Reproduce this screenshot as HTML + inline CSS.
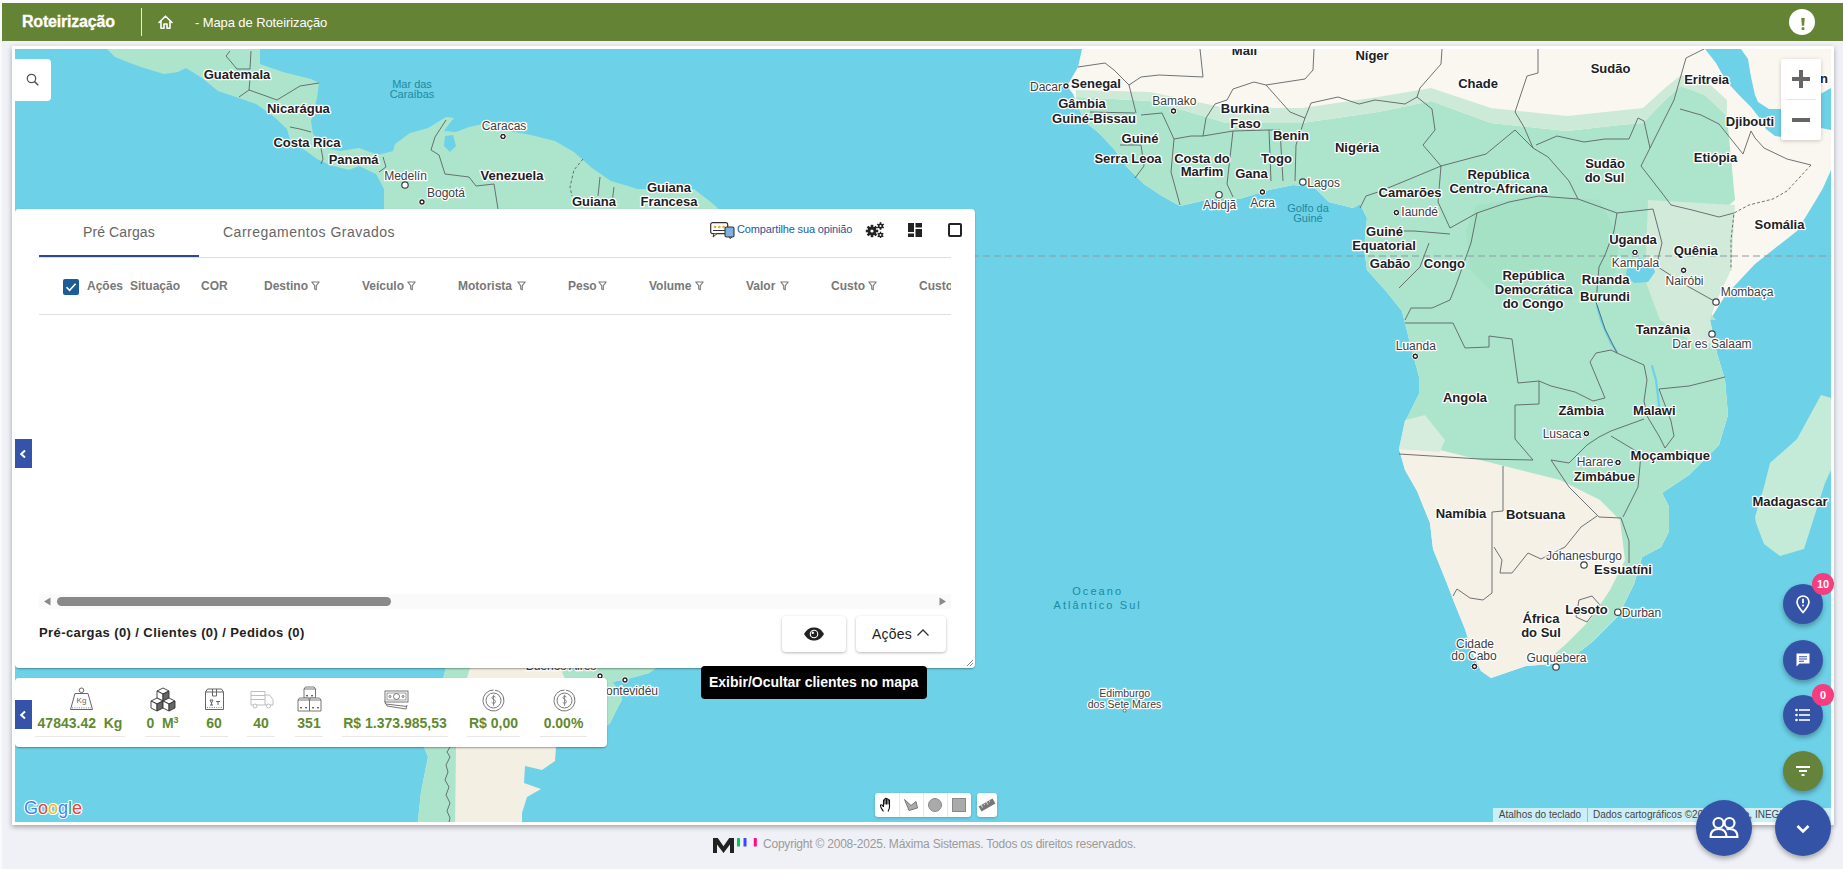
<!DOCTYPE html>
<html><head><meta charset="utf-8">
<style>
*{box-sizing:border-box;margin:0;padding:0}
html,body{width:1843px;height:869px;overflow:hidden}
body{background:#f0f1f6;font-family:"Liberation Sans",sans-serif;position:relative}
.abs{position:absolute}
#topstrip{left:0;top:0;width:1843px;height:3px;background:#fbfbfc}
#leftstrip{left:0;top:0;width:2px;height:869px;background:#fafafb}
#header{left:2px;top:3px;width:1841px;height:38px;background:#658335;color:#fff}
#card{left:12px;top:46px;width:1822px;height:779px;background:#fff;box-shadow:0 2px 5px rgba(0,0,0,.33)}
#map{left:15px;top:49px;width:1816px;height:773px;background:#6dd1e7;overflow:hidden}
#map svg{position:absolute;left:0;top:0}
.lbl{position:absolute;font-weight:bold;font-size:13px;color:#202124;white-space:nowrap;text-shadow:0 0 2px #fff,0 0 2px #fff,0 0 2px #fff;line-height:14px;text-align:center}
.city{position:absolute;font-size:11px;color:#3c4043;white-space:nowrap;text-shadow:0 0 2px #fff,0 0 2px #fff,0 0 2px #fff;line-height:12px;text-align:center}
.sea{position:absolute;font-size:11px;color:#1b8fa8;white-space:nowrap;line-height:11px;text-align:center}
#panel{left:15px;top:209px;width:960px;height:459px;background:#fff;border-radius:4px;box-shadow:0 2px 2px -1px rgba(0,0,0,.35), 1px 0 2px -1px rgba(0,0,0,.2)}
#panel .abs{position:absolute}
#panel > .abs{margin-left:-15px;margin-top:-209px}
.tab{font-size:14px;color:#666;line-height:16px;letter-spacing:0.1px}
.colh{position:absolute;top:279px;font-size:12px;font-weight:bold;color:#787878;line-height:14px}
.btn{background:#fff;border-radius:4px;box-shadow:0 1px 3px rgba(0,0,0,.28)}
#stats{left:15px;top:678px;width:592px;height:69px;background:#fff;border-radius:4px;box-shadow:0 2px 2px -1px rgba(0,0,0,.35), 1px 0 2px -1px rgba(0,0,0,.2)}
.chev{width:17px;height:29px;background:#3553a8}
.stt{top:715px;font-size:14px;font-weight:bold;color:#5f8a2e;line-height:16px;text-align:center;white-space:nowrap}
.sul{top:736px;height:1px;background:#e8e8e8}
.google{font-size:17px;font-weight:bold;line-height:22px;letter-spacing:-0.3px;-webkit-text-stroke:0;text-shadow:0 0 1px #fff,0 0 2px #fff,0 0 2px #fff}
.attr{top:808px;height:14px;background:rgba(255,255,255,.65);font-size:10px;color:#444;line-height:14px;text-align:center;white-space:nowrap;overflow:hidden}
.fab{width:40px;height:40px;border-radius:50%;background:#3553a6;box-shadow:0 3px 5px rgba(0,0,0,.3)}
.fab.big{width:56px;height:56px}
.badge{width:22px;height:22px;border-radius:50%;background:#f53d7f;color:#fff;font-size:11px;font-weight:bold;text-align:center;line-height:22px}
</style></head>
<body>
<div class="abs" id="topstrip"></div>
<div class="abs" id="leftstrip"></div>
<div class="abs" id="header">
<div class="abs" style="left:20px;top:10px;font-size:16px;font-weight:bold;letter-spacing:-0.2px;line-height:18px;-webkit-text-stroke:0.3px #fff">Roteirização</div>
<div class="abs" style="left:139px;top:5px;width:1px;height:28px;background:#e8eedf"></div>
<svg class="abs" style="left:155px;top:11px" width="17" height="16" viewBox="0 0 17 16"><path d="M2,8.5 L8.5,2.2 L15,8.5 M4,7 V14.2 H7 V10 H10 V14.2 H13 V7" fill="none" stroke="#fff" stroke-width="1.6" stroke-linejoin="round" stroke-linecap="round"/></svg>
<div class="abs" style="left:193px;top:12px;font-size:13px;line-height:15px;letter-spacing:-0.1px">- Mapa de Roteirização</div>
<div class="abs" style="left:1787px;top:6px;width:26px;height:26px;border-radius:50%;background:#fff"></div>
<svg class="abs" style="left:1797px;top:13px" width="8" height="16" viewBox="0 0 8 16"><path d="M2.2,2 H5.8 L5.1,9.8 H2.9 Z" fill="#6a8a3a"/><rect x="2.6" y="11.2" width="2.8" height="2.7" rx="0.5" fill="#6a8a3a"/></svg>
</div>
<div class="abs" id="card"></div>
<div class="abs" id="map">
<svg width="1816" height="773" viewBox="15 49 1816 773"><path fill="#ace5cc" d="M107,49 L260,49 L260,64 L283,72 L311,79 L319,83 L317,98 L311,121 L313,134 L325,148 L340,151 L359,148 L378,155 L393,151 L395,144 L410,133 L428,128 L446,117 L454,118 L449,124 L444,131 L456,132 L469,127 L483,124 L509,131 L531,135 L555,141 L574,152 L592,168 L611,181 L638,189 L694,189 L712,203 L722,212 L722,230 L384,230 L384,189 L376,174 L359,166 L349,170 L330,165 L317,159 L306,151 L290,140 L287,129 L272,115 L256,104 L239,98 L218,91 L202,78 L186,68 L178,72 L164,74 L144,68 L130,63 L115,57 Z"/>
<path fill="#6dd1e7" d="M445,136 L453,135 L456,146 L450,152 L444,146 Z"/>
<path fill="#f4efe3" d="M446,668 L656,668 L649,673 L631,678 L612,682 L619,690 L622,700 L619,705 L610,723 L590,740 L556,747 L555,761 L542,770 L525,766 L524,783 L541,789 L527,797 L522,813 L522,830 L417,830 L421,792 L428,757 L424,747 L430,720 L440,690 Z"/>
<path fill="#ace5cc" d="M417,830 L421,792 L428,757 L424,747 L430,720 L440,690 L446,668 L470,668 L460,700 L456,747 L455,830 Z"/>
<path fill="#ace5cc" d="M560,668 L656,668 L649,673 L631,678 L612,682 L619,690 L622,700 L619,705 L610,723 L590,735 L575,700 Z"/>
<path fill="#faf7f1" d="M1082,49 L1705,49 L1716,63 L1726,81 L1739,95 L1751,107 L1758,116 L1766,129 L1775,136 L1790,138 L1821,128 L1831,130 L1831,170 L1823,188 L1816,200 L1797,231 L1755,264 L1725,296 L1710,320 L1716,350 L1725,380 L1728,415 L1719,445 L1689,475 L1662,493 L1669,507 L1669,531 L1661,547 L1642,557 L1634,584 L1618,616 L1592,642 L1565,663 L1526,666 L1491,678 L1481,671 L1473,655 L1465,629 L1454,602 L1446,581 L1433,549 L1430,523 L1417,491 L1405,470 L1399,449 L1405,422 L1419,394 L1419,377 L1409,339 L1402,311 L1385,290 L1367,270 L1364,249 L1367,218 L1360,204 L1353,208 L1329,202 L1314,187 L1293,185 L1269,190 L1239,199 L1210,199 L1180,206 L1162,196 L1144,184 L1126,166 L1114,149 L1099,133 L1084,121 L1078,106 L1073,94 L1067,86 L1078,67 Z"/>
<path fill="#f5f1e6" d="M1399,449 L1405,470 L1417,491 L1430,523 L1433,549 L1446,581 L1454,602 L1465,629 L1473,655 L1481,671 L1491,678 L1526,666 L1565,663 L1592,642 L1618,616 L1634,584 L1642,557 L1661,547 L1669,531 L1669,507 L1662,493 L1620,480 L1560,470 L1500,455 L1440,445 Z"/>
<path fill="#ace5cc" d="M1076,97 L1150,101 L1200,115 L1226,123 L1302,123 L1378,112 L1431,101 L1491,123 L1567,131 L1620,125 L1643,123 L1665,100 L1681,86 L1705,95 L1727,116 L1735,200 L1700,230 L1680,270 L1700,300 L1716,320 L1710,320 L1716,350 L1725,380 L1728,415 L1719,445 L1689,475 L1662,493 L1669,507 L1669,531 L1661,547 L1642,557 L1634,584 L1618,616 L1592,642 L1565,663 L1545,662 L1565,645 L1590,620 L1610,590 L1625,560 L1620,520 L1600,500 L1560,480 L1500,465 L1440,450 L1399,449 L1405,422 L1419,394 L1419,377 L1409,339 L1402,311 L1385,290 L1367,270 L1364,249 L1367,218 L1360,204 L1353,208 L1329,202 L1314,187 L1293,185 L1269,190 L1239,199 L1210,199 L1180,206 L1162,196 L1144,184 L1126,166 L1114,149 L1099,133 L1084,121 L1078,106 Z"/>
<path fill="#cdead8" d="M1076,90 L1150,92 L1226,108 L1302,108 L1378,97 L1431,88 L1491,108 L1567,116 L1643,108 L1665,88 L1681,75 L1705,80 L1727,100 L1727,116 L1705,95 L1681,86 L1665,100 L1643,123 L1620,125 L1567,131 L1491,123 L1431,101 L1378,112 L1302,123 L1226,123 L1200,115 L1150,101 L1076,97 Z"/>
<path fill="#a5e2c5" d="M1476,205 L1540,196 L1600,200 L1620,240 L1612,290 L1570,300 L1500,300 L1470,270 L1466,230 Z"/>
<path fill="#d2ead9" d="M1648,200 L1735,205 L1731,270 L1716,302 L1710,320 L1716,345 L1690,340 L1660,320 L1645,280 Z"/>
<path fill="#d6ecdc" d="M1405,420 L1425,415 L1445,440 L1440,452 L1399,449 Z"/>
<path fill="#6dd1e7" d="M1628,262 L1640,258 L1652,262 L1655,272 L1648,282 L1634,283 L1626,275 Z"/>
<path fill="#faf7f1" d="M1741,49 L1831,49 L1831,88 L1810,100 L1781,109 L1769,109 L1758,102 L1755,95 L1751,77 L1748,59 Z"/>
<path fill="#c4ebd8" d="M1821,395 L1831,398 L1831,470 L1825,483 L1804,549 L1780,556 L1764,544 L1756,523 L1755,517 L1764,487 L1770,463 L1797,439 Z"/>
<g fill="#a9e3c9" opacity="1">
</g>
<g fill="none" stroke="#6dd1e7" stroke-width="2.2" stroke-linecap="round"><polyline points="1597,306 1601,320 1605,330 1611,343 1617,352"/><polyline points="1652,366 1656,380 1658,396 1659,406 1657,415"/></g>
<path d="M15,256 H1831" stroke="#8d9aa0" stroke-width="1.2" stroke-dasharray="7 4" fill="none"/>
<g fill="none" stroke="#5f6368" stroke-width="0.9" stroke-linejoin="round">
<polyline points="230,51 226,56 237,69 250,69 251,51"/>
<polyline points="250,79 249,90 239,97"/>
<polyline points="249,90 266,96 277,100 300,86 319,83"/>
<polyline points="290,127 300,129 311,132"/>
<polyline points="321,148 323,159 321,164"/>
<polyline points="383,157 386,167 379,172"/>
<polyline points="446,120 435,137 431,150 439,155 445,174 469,177 476,186 494,184 498,209"/>
<polyline points="600,177 598,196"/>
<polyline points="614,187 612,203"/>
<polyline points="1078,67 1105,63 1114,70 1129,85 1141,77 1159,75 1203,77 1200,49"/>
<polyline points="1314,49 1313,70 1305,79 1266,85 1254,82 1233,89 1227,100 1215,104 1206,118 1203,136"/>
<polyline points="1266,85 1290,112 1305,118"/>
<polyline points="1305,118 1311,103 1338,97 1359,104 1375,100 1405,104 1417,97"/>
<polyline points="1305,118 1296,145 1295,181"/>
<polyline points="1280,130 1283,181"/>
<polyline points="1269,130 1271,181"/>
<polyline points="1233,131 1269,130 1280,130"/>
<polyline points="1233,131 1227,184 1233,197"/>
<polyline points="1174,139 1191,136 1203,136 1233,131"/>
<polyline points="1174,139 1171,172 1180,205"/>
<polyline points="1141,115 1162,113 1174,139"/>
<polyline points="1090,112 1135,113"/>
<polyline points="1120,145 1141,145 1144,166 1135,178"/>
<polyline points="1129,85 1136,113"/>
<polyline points="1442,49 1441,64 1420,88 1417,97"/>
<polyline points="1417,97 1432,109 1435,130 1423,145 1441,166 1405,181 1378,192 1366,196 1360,208"/>
<polyline points="1538,49 1538,73 1527,76 1515,112 1524,127 1533,148"/>
<polyline points="1441,166 1486,154 1515,130 1533,148"/>
<polyline points="1533,148 1548,157 1569,181 1578,199"/>
<polyline points="1536,145 1557,136 1584,142 1605,139 1629,139 1638,118 1644,121 1650,148"/>
<polyline points="1650,148 1641,166 1662,193 1671,205"/>
<polyline points="1650,148 1674,100 1686,58 1704,49"/>
<polyline points="1680,109 1701,115 1719,124 1743,154 1751,131"/>
<polyline points="1751,131 1755,138 1764,148 1787,159 1811,165"/>
<polyline points="1671,205 1692,210 1719,217 1734,213"/>
<polyline points="1578,199 1617,213 1653,209"/>
<polyline points="1653,209 1662,243 1656,267"/>
<polyline points="1617,213 1614,231 1605,255 1599,267 1596,302"/>
<polyline points="1578,199 1539,196 1509,202 1477,213 1471,243"/>
<polyline points="1441,166 1438,202 1450,228 1477,213"/>
<polyline points="1378,231 1414,231 1450,234"/>
<polyline points="1429,243 1420,267 1408,279 1399,288"/>
<polyline points="1471,243 1456,285 1450,300 1432,308 1411,308 1405,320"/>
<polyline points="1405,323 1453,323 1465,348 1489,347 1489,336 1512,339 1518,383 1539,381"/>
<polyline points="1539,381 1539,404 1515,405 1515,439 1533,460"/>
<polyline points="1399,454 1480,459 1533,460"/>
<polyline points="1539,381 1551,386 1575,392 1593,401 1605,398 1590,362 1596,353 1611,350 1617,353"/>
<polyline points="1596,302 1605,329 1617,353"/>
<polyline points="1617,353 1644,365 1647,380 1644,401 1647,416"/>
<polyline points="1659,389 1689,386 1725,377"/>
<polyline points="1647,416 1659,436 1665,448 1674,436 1671,421 1659,389"/>
<polyline points="1611,431 1644,419"/>
<polyline points="1611,431 1599,437 1587,445 1569,463 1551,460"/>
<polyline points="1611,436 1641,454 1638,487 1623,517"/>
<polyline points="1551,460 1569,487 1584,502 1599,517 1621,518"/>
<polyline points="1503,466 1503,511 1492,512 1492,593 1483,600 1470,598 1457,589 1453,596"/>
<polyline points="1494,547 1502,560 1500,573 1512,573 1528,553 1541,559 1565,547 1581,527 1597,516"/>
<polyline points="1621,518 1629,541 1629,563"/>
<polyline points="1579,600 1592,596 1600,605 1587,622 1576,617 1579,600"/>
<polyline points="1647,260 1689,287 1716,302"/>
<polyline points="450,747 447,752 450,757 446,765 448,772 445,780 449,787 446,795 450,803 447,811 450,818 449,822"/>
</g>
<g fill="none" stroke="#5f6368" stroke-width="0.9" stroke-dasharray="3 2">
<polyline points="583,159 574,170 570,187 572,196"/>
<polyline points="1811,165 1787,191 1773,199 1749,205 1734,213 1731,240 1731,270"/>
</g>
<g font-family="Liberation Sans" font-weight="bold" font-size="13" fill="#202124" stroke="#fff" stroke-width="2.6" paint-order="stroke" stroke-linejoin="round" text-anchor="middle">
<text x="237" y="78.5">Guatemala</text>
<text x="298.4" y="112.5">Nicarágua</text>
<text x="307" y="146.5">Costa Rica</text>
<text x="353.6" y="164">Panamá</text>
<text x="512" y="180">Venezuela</text>
<text x="594" y="205.5">Guiana</text>
<text x="669" y="192">Guiana</text>
<text x="669" y="206">Francesa</text>
<text x="1372" y="60">Níger</text>
<text x="1244.5" y="55">Mali</text>
<text x="1096" y="87.5">Senegal</text>
<text x="1082" y="108">Gâmbia</text>
<text x="1094" y="123">Guiné-Bissau</text>
<text x="1245" y="113">Burkina</text>
<text x="1245.5" y="127.5">Faso</text>
<text x="1140" y="142.5">Guiné</text>
<text x="1291" y="140">Benin</text>
<text x="1357" y="151.5">Nigéria</text>
<text x="1128" y="162.5">Serra Leoa</text>
<text x="1202" y="162.5">Costa do</text>
<text x="1202" y="176">Marfim</text>
<text x="1276.5" y="162.5">Togo</text>
<text x="1251.5" y="177.5">Gana</text>
<text x="1478" y="88">Chade</text>
<text x="1610.5" y="73">Sudão</text>
<text x="1706.6" y="83.5">Eritreia</text>
<text x="1750" y="126">Djibouti</text>
<text x="1715.5" y="162">Etiópia</text>
<text x="1605" y="168">Sudão</text>
<text x="1604.5" y="182">do Sul</text>
<text x="1498.5" y="179">República</text>
<text x="1498.6" y="193">Centro-Africana</text>
<text x="1410" y="197">Camarões</text>
<text x="1384.5" y="236">Guiné</text>
<text x="1384" y="250">Equatorial</text>
<text x="1390" y="267.5">Gabão</text>
<text x="1444.4" y="267.5">Congo</text>
<text x="1633" y="243.5">Uganda</text>
<text x="1695.7" y="255">Quênia</text>
<text x="1779.5" y="228.5">Somália</text>
<text x="1533.5" y="280">República</text>
<text x="1533.8" y="294">Democrática</text>
<text x="1533" y="308">do Congo</text>
<text x="1605.6" y="284">Ruanda</text>
<text x="1605" y="300.5">Burundi</text>
<text x="1663" y="334">Tanzânia</text>
<text x="1465" y="401.5">Angola</text>
<text x="1581.3" y="415">Zâmbia</text>
<text x="1654.2" y="415">Malawi</text>
<text x="1670.2" y="460">Moçambique</text>
<text x="1604.5" y="480.5">Zimbábue</text>
<text x="1790" y="506">Madagascar</text>
<text x="1461" y="518">Namíbia</text>
<text x="1535.6" y="518.5">Botsuana</text>
<text x="1623" y="574">Essuatíni</text>
<text x="1586.5" y="613.5">Lesoto</text>
<text x="1541" y="623">África</text>
<text x="1541" y="637">do Sul</text>
<text x="1824" y="83">n</text>
</g>
<g font-family="Liberation Sans" font-size="12" fill="#3c4043" stroke="#fff" stroke-width="2.6" paint-order="stroke" stroke-linejoin="round" text-anchor="middle">
<text x="405.5" y="179.5">Medelín</text>
<text x="446" y="196.5">Bogotá</text>
<text x="504" y="130">Caracas</text>
<text x="1046" y="91">Dacar</text>
<text x="1174.3" y="105">Bamako</text>
<text x="1323.6" y="187">Lagos</text>
<text x="1219.6" y="208.5">Abidjã</text>
<text x="1262.6" y="207">Acra</text>
<text x="1419.7" y="216">Iaundé</text>
<text x="1635.5" y="267">Kampala</text>
<text x="1684.5" y="285">Nairóbi</text>
<text x="1747" y="296">Mombaça</text>
<text x="1711.9" y="348">Dar es Salaam</text>
<text x="1415.8" y="350">Luanda</text>
<text x="1562" y="437.5">Lusaca</text>
<text x="1595" y="465.5">Harare</text>
<text x="1584" y="559.5">Johanesburgo</text>
<text x="1641.5" y="616.5">Durban</text>
<text x="1475" y="648">Cidade</text>
<text x="1474" y="660">do Cabo</text>
<text x="1556.5" y="661.5">Guquebera</text>
<text x="561" y="670">Buenos Aires</text>
<text x="627" y="694.5">Montevidéu</text>
<text x="1124.7" y="697" font-size="10.5">Edimburgo</text><text x="1124.5" y="707.5" font-size="10.5">dos Sete Mares</text>
</g>
<g stroke="#fff" stroke-width="1">
<circle cx="405" cy="185" r="3.2" fill="#fff" stroke="#3c4043" stroke-width="1.2"/>
<circle cx="422" cy="202" r="3.3" fill="#202124"/><circle cx="422" cy="202" r="1.3" fill="#fff" stroke="none"/>
<circle cx="503" cy="136.5" r="3.3" fill="#202124"/><circle cx="503" cy="136.5" r="1.3" fill="#fff" stroke="none"/>
<circle cx="1066" cy="86" r="3.3" fill="#202124"/><circle cx="1066" cy="86" r="1.3" fill="#fff" stroke="none"/>
<circle cx="1173.5" cy="111" r="3.3" fill="#202124"/><circle cx="1173.5" cy="111" r="1.3" fill="#fff" stroke="none"/>
<circle cx="1302.8" cy="182" r="3.2" fill="#fff" stroke="#3c4043" stroke-width="1.2"/>
<circle cx="1219" cy="194.7" r="3.2" fill="#fff" stroke="#3c4043" stroke-width="1.2"/>
<circle cx="1262.4" cy="192" r="3.3" fill="#202124"/><circle cx="1262.4" cy="192" r="1.3" fill="#fff" stroke="none"/>
<circle cx="1396.4" cy="212.6" r="3.3" fill="#202124"/><circle cx="1396.4" cy="212.6" r="1.3" fill="#fff" stroke="none"/>
<circle cx="1635" cy="252.4" r="3.3" fill="#202124"/><circle cx="1635" cy="252.4" r="1.3" fill="#fff" stroke="none"/>
<circle cx="1683.6" cy="270.3" r="3.3" fill="#202124"/><circle cx="1683.6" cy="270.3" r="1.3" fill="#fff" stroke="none"/>
<circle cx="1716" cy="302" r="3.2" fill="#fff" stroke="#3c4043" stroke-width="1.2"/>
<circle cx="1712" cy="334" r="3.2" fill="#fff" stroke="#3c4043" stroke-width="1.2"/>
<circle cx="1415.3" cy="356.3" r="3.3" fill="#202124"/><circle cx="1415.3" cy="356.3" r="1.3" fill="#fff" stroke="none"/>
<circle cx="1586.4" cy="433.5" r="3.3" fill="#202124"/><circle cx="1586.4" cy="433.5" r="1.3" fill="#fff" stroke="none"/>
<circle cx="1618" cy="462.5" r="3.3" fill="#202124"/><circle cx="1618" cy="462.5" r="1.3" fill="#fff" stroke="none"/>
<circle cx="1584" cy="565" r="3.2" fill="#fff" stroke="#3c4043" stroke-width="1.2"/>
<circle cx="1617.8" cy="612.2" r="3.2" fill="#fff" stroke="#3c4043" stroke-width="1.2"/>
<circle cx="1474.5" cy="666.5" r="3.3" fill="#202124"/><circle cx="1474.5" cy="666.5" r="1.3" fill="#fff" stroke="none"/>
<circle cx="1556" cy="667" r="3.2" fill="#fff" stroke="#3c4043" stroke-width="1.2"/>
<circle cx="600" cy="676" r="3.3" fill="#202124"/><circle cx="600" cy="676" r="1.3" fill="#fff" stroke="none"/>
<circle cx="625" cy="680" r="3.3" fill="#202124"/><circle cx="625" cy="680" r="1.3" fill="#fff" stroke="none"/>
<circle cx="1124.7" cy="710.5" r="1.5" fill="#fff" stroke="#555" stroke-width="0.8"/>
</g>
<g font-family="Liberation Sans" font-size="11" fill="#2089a2" text-anchor="middle">
<text x="412" y="88">Mar das</text>
<text x="412" y="97.5">Caraíbas</text>
<text x="1308" y="212">Golfo da</text>
<text x="1308" y="222">Guiné</text>
<text x="1097.7" y="595" letter-spacing="2.1">Oceano</text><text x="1097.7" y="609" letter-spacing="2.1">Atlântico Sul</text>
</g></svg>
</div>

<div class="abs" id="panel">
<div class="abs tab" style="left:83px;top:224px">Pré Cargas</div>
<div class="abs tab" style="left:223px;top:224px;letter-spacing:0.5px">Carregamentos Gravados</div>
<div class="abs" style="left:39px;top:257px;width:912px;height:1px;background:#dedede"></div>
<div class="abs" style="left:39px;top:255px;width:160px;height:2px;background:#2a48a0"></div>
<svg class="abs" style="left:710px;top:222px" width="25" height="17" viewBox="0 0 25 17"><rect x="0.7" y="0.7" width="17" height="11" rx="2" fill="#fff" stroke="#333" stroke-width="1.2"/><circle cx="5" cy="5" r="1.3" fill="#e8a92a"/><circle cx="9.3" cy="5" r="1.3" fill="#e8a92a"/><circle cx="13.6" cy="5" r="1.3" fill="#e8a92a"/><path d="M3,8.5 H15" stroke="#333" stroke-width="1"/><path d="M4,11.7 L3,15 L7,11.7" fill="#fff" stroke="#333" stroke-width="1"/><rect x="15" y="5" width="9" height="10" rx="1.5" fill="#7fb0e0" stroke="#333" stroke-width="1.1"/><path d="M19.5,15 L20,16.5 L22,15" fill="#7fb0e0" stroke="#333" stroke-width="1"/></svg>
<div class="abs" style="left:737px;top:223px;font-size:11px;line-height:13px;color:#1a5b9c;letter-spacing:-0.15px">Compartilhe sua opinião</div>
<svg class="abs" style="left:865px;top:222px" width="20" height="16" viewBox="0 0 20 16"><g fill="#222"><circle cx="7" cy="9" r="4.2"/><g transform="translate(7 9)"><rect x="-1.3" y="-6.2" width="2.6" height="12.4"/><rect x="-1.3" y="-6.2" width="2.6" height="12.4" transform="rotate(45)"/><rect x="-1.3" y="-6.2" width="2.6" height="12.4" transform="rotate(90)"/><rect x="-1.3" y="-6.2" width="2.6" height="12.4" transform="rotate(135)"/></g><circle cx="7" cy="9" r="1.6" fill="#fff"/><g transform="translate(15.5 4)"><circle r="2.6"/><rect x="-0.8" y="-3.8" width="1.6" height="7.6"/><rect x="-0.8" y="-3.8" width="1.6" height="7.6" transform="rotate(60)"/><rect x="-0.8" y="-3.8" width="1.6" height="7.6" transform="rotate(120)"/><circle r="1" fill="#fff"/></g><g transform="translate(15.5 13)"><circle r="2.3"/><rect x="-0.7" y="-3.3" width="1.4" height="6.6"/><rect x="-0.7" y="-3.3" width="1.4" height="6.6" transform="rotate(60)"/><rect x="-0.7" y="-3.3" width="1.4" height="6.6" transform="rotate(120)"/><circle r="0.9" fill="#fff"/></g></g></svg>
<svg class="abs" style="left:908px;top:223px" width="14" height="14" viewBox="0 0 14 14"><g fill="#222"><rect x="0" y="0" width="6" height="9"/><rect x="0" y="10.5" width="6" height="3.5"/><rect x="7.5" y="0" width="6.5" height="4.5"/><rect x="7.5" y="6" width="6.5" height="8"/></g></svg>
<div class="abs" style="left:948px;top:223px;width:14px;height:14px;border:2px solid #222;border-radius:2px"></div>
<div class="abs" style="left:63px;top:279px;width:16px;height:16px;background:#1c5d99;border-radius:2px"></div>
<svg class="abs" style="left:63px;top:279px" width="16" height="16" viewBox="0 0 16 16"><path d="M3.5,8.3 L6.6,11.3 L12.6,4.8" fill="none" stroke="#fff" stroke-width="1.6"/></svg>
<div class="abs" style="left:39px;top:272px;width:912px;height:30px;overflow:hidden">
<div style="position:relative;left:-39px;top:-272px;width:1000px;height:400px">
<div class="abs colh" style="left:87px">Ações</div><div class="abs colh" style="left:130px">Situação</div><div class="abs colh" style="left:201px">COR</div><div class="abs colh" style="left:264px">Destino</div><svg class="abs" style="left:311px;top:281px" width="9" height="10" viewBox="0 0 9 10"><path d="M0.8,1 H8.2 L5.3,4.6 V8.8 L3.7,8 V4.6 Z" fill="none" stroke="#7a7a7a" stroke-width="1.1" stroke-linejoin="round"/></svg><div class="abs colh" style="left:362px">Veículo</div><svg class="abs" style="left:407px;top:281px" width="9" height="10" viewBox="0 0 9 10"><path d="M0.8,1 H8.2 L5.3,4.6 V8.8 L3.7,8 V4.6 Z" fill="none" stroke="#7a7a7a" stroke-width="1.1" stroke-linejoin="round"/></svg><div class="abs colh" style="left:458px">Motorista</div><svg class="abs" style="left:517px;top:281px" width="9" height="10" viewBox="0 0 9 10"><path d="M0.8,1 H8.2 L5.3,4.6 V8.8 L3.7,8 V4.6 Z" fill="none" stroke="#7a7a7a" stroke-width="1.1" stroke-linejoin="round"/></svg><div class="abs colh" style="left:568px">Peso</div><svg class="abs" style="left:598px;top:281px" width="9" height="10" viewBox="0 0 9 10"><path d="M0.8,1 H8.2 L5.3,4.6 V8.8 L3.7,8 V4.6 Z" fill="none" stroke="#7a7a7a" stroke-width="1.1" stroke-linejoin="round"/></svg><div class="abs colh" style="left:649px">Volume</div><svg class="abs" style="left:695px;top:281px" width="9" height="10" viewBox="0 0 9 10"><path d="M0.8,1 H8.2 L5.3,4.6 V8.8 L3.7,8 V4.6 Z" fill="none" stroke="#7a7a7a" stroke-width="1.1" stroke-linejoin="round"/></svg><div class="abs colh" style="left:746px">Valor</div><svg class="abs" style="left:780px;top:281px" width="9" height="10" viewBox="0 0 9 10"><path d="M0.8,1 H8.2 L5.3,4.6 V8.8 L3.7,8 V4.6 Z" fill="none" stroke="#7a7a7a" stroke-width="1.1" stroke-linejoin="round"/></svg><div class="abs colh" style="left:831px">Custo</div><svg class="abs" style="left:868px;top:281px" width="9" height="10" viewBox="0 0 9 10"><path d="M0.8,1 H8.2 L5.3,4.6 V8.8 L3.7,8 V4.6 Z" fill="none" stroke="#7a7a7a" stroke-width="1.1" stroke-linejoin="round"/></svg><div class="abs colh" style="left:919px">Custo</div>
</div></div>
<div class="abs" style="left:39px;top:314px;width:912px;height:1px;background:#e0e0e0"></div>
<div class="abs" style="left:39px;top:594px;width:912px;height:15px;background:#fafafa"></div>
<svg class="abs" style="left:43px;top:597px" width="8" height="9" viewBox="0 0 8 9"><path d="M7.5,0.5 V8.5 L1,4.5 Z" fill="#8a8a8a"/></svg>
<div class="abs" style="left:57px;top:597px;width:334px;height:9px;background:#898989;border-radius:5px"></div>
<svg class="abs" style="left:939px;top:597px" width="8" height="9" viewBox="0 0 8 9"><path d="M0.5,0.5 V8.5 L7,4.5 Z" fill="#8a8a8a"/></svg>
<div class="abs" style="left:39px;top:625px;font-size:13px;font-weight:bold;color:#222;line-height:15px;letter-spacing:0.4px">Pré-cargas (0) / Clientes (0) / Pedidos (0)</div>
<div class="abs btn" style="left:782px;top:616px;width:64px;height:36px"></div>
<svg class="abs" style="left:803px;top:627px" width="22" height="14" viewBox="0 0 22 14"><path d="M1,7 C4,1.5 8,0.5 11,0.5 C14,0.5 18,1.5 21,7 C18,12.5 14,13.5 11,13.5 C8,13.5 4,12.5 1,7 Z" fill="#222"/><circle cx="11" cy="7" r="4.3" fill="#fff"/><circle cx="11" cy="7" r="3.2" fill="#222"/><circle cx="9.8" cy="5.8" r="1.2" fill="#fff"/></svg>
<div class="abs btn" style="left:856px;top:616px;width:90px;height:36px"></div>
<div class="abs" style="left:872px;top:626px;font-size:14px;color:#222;line-height:16px;letter-spacing:0.2px">Ações</div>
<svg class="abs" style="left:916px;top:628px" width="14" height="9" viewBox="0 0 14 9"><path d="M1.5,7.5 L7,2 L12.5,7.5" fill="none" stroke="#333" stroke-width="1.3"/></svg>
<svg class="abs" style="left:966px;top:659px" width="8" height="8" viewBox="0 0 8 8"><path d="M1,7 L7,1 M4,7 L7,4" stroke="#777" stroke-width="0.9"/></svg>
</div>
<div class="abs" style="left:701px;top:666px;width:226px;height:33px;background:#000;border-radius:4px"></div>
<div class="abs" style="left:709px;top:674px;font-size:14px;font-weight:bold;color:#fff;line-height:16px;letter-spacing:0px">Exibir/Ocultar clientes no mapa</div>

<div class="abs" id="stats"></div>
<div class="abs chev" style="left:15px;top:439px"></div>
<div class="abs chev" style="left:15px;top:700px"></div>
<div class="abs stt" style="left:35px;width:90px">47843.42&nbsp; Kg</div>
<div class="abs stt" style="left:145px;width:35px">0&nbsp; M<sup style="font-size:9px;vertical-align:5px;line-height:0">3</sup></div>
<div class="abs stt" style="left:200px;width:28px">60</div>
<div class="abs stt" style="left:247px;width:28px">40</div>
<div class="abs stt" style="left:295px;width:28px">351</div>
<div class="abs stt" style="left:342px;width:106px">R$ 1.373.985,53</div>
<div class="abs stt" style="left:467px;width:53px">R$ 0,00</div>
<div class="abs stt" style="left:540px;width:47px">0.00%</div>
<div class="abs sul" style="left:35px;width:90px"></div>
<div class="abs sul" style="left:145px;width:35px"></div>
<div class="abs sul" style="left:200px;width:28px"></div>
<div class="abs sul" style="left:247px;width:28px"></div>
<div class="abs sul" style="left:295px;width:28px"></div>
<div class="abs sul" style="left:342px;width:106px"></div>
<div class="abs sul" style="left:467px;width:53px"></div>
<div class="abs sul" style="left:540px;width:47px"></div>
<svg class="abs" style="left:69px;top:687px" width="25" height="24" viewBox="0 0 25 24"><g fill="none" stroke="#666" stroke-width="1"><circle cx="12.5" cy="3.3" r="2.3"/><path d="M6,6.5 H19 L23.5,22.5 H1.5 Z" fill="#fff"/></g><path d="M3,20.8 H22" stroke="#666" stroke-width="0.8" stroke-dasharray="1 1.3"/><text x="12.5" y="16" font-family="Liberation Sans" font-size="8" text-anchor="middle" fill="#666">Kg</text></svg>
<svg class="abs" style="left:150px;top:687px" width="26" height="25" viewBox="0 0 26 25"><g stroke="#333" stroke-width="0.9" stroke-linejoin="round"><path d="M13,1 L19,4 L13,7 L7,4 Z" fill="#fff"/><path d="M7,4 V11 L13,14 V7 Z" fill="#fff"/><path d="M19,4 V11 L13,14 V7 Z" fill="#666"/><path d="M7,11 L13,14 L7,17 L1,14 Z" fill="#fff"/><path d="M1,14 V21 L7,24 V17 Z" fill="#fff"/><path d="M13,14 V21 L7,24 V17 Z" fill="#666"/><path d="M19,11 L25,14 L19,17 L13,14 Z" fill="#fff"/><path d="M13,14 V21 L19,24 V17 Z" fill="#fff"/><path d="M25,14 V21 L19,24 V17 Z" fill="#666"/></g></svg>
<svg class="abs" style="left:203px;top:688px" width="23" height="23" viewBox="0 0 23 23"><g fill="none" stroke="#666" stroke-width="1"><path d="M2.5,4 L4.5,1 H18.5 L20.5,4 V21.5 H2.5 Z"/><path d="M2.5,4 H20.5"/><path d="M9.5,1 V8 H13.5 V1"/><path d="M7,12 H10 L8.5,15 Z M8.5,15 V17 M7,17 H10"/><path d="M13,13.5 H17 M15,13.5 V17"/></g><path d="M4,19.5 H19" stroke="#666" stroke-width="0.8" stroke-dasharray="1 1.3"/></svg>
<svg class="abs" style="left:250px;top:690px" width="24" height="19" viewBox="0 0 24 19"><g fill="none" stroke="#bdbdbd" stroke-width="1"><path d="M1,1.5 H15 V15 H1 Z"/><path d="M1,5.5 H15 M1,9.5 H15"/><path d="M15,5 H19.5 L23,9.5 V15 H15"/><circle cx="5" cy="16" r="2" fill="#fff"/><circle cx="18.5" cy="16" r="2" fill="#fff"/></g></svg>
<svg class="abs" style="left:297px;top:686px" width="25" height="26" viewBox="0 0 25 26"><g fill="#fff" stroke="#666" stroke-width="0.9"><path d="M7,3 L8.5,1 H17 L18.5,3 V12 H7 Z"/><path d="M7,3 H18.5"/><path d="M1,14 L2.5,12 H11.5 L12.5,14 V25 H1 Z"/><path d="M1,14 H12.5"/><path d="M12.5,14 L13.5,12 H22.5 L24,14 V25 H12.5 Z"/><path d="M12.5,14 H24"/></g><g fill="#666"><rect x="3" y="21" width="2" height="1.4"/><rect x="8" y="21" width="2" height="1.4"/><rect x="15" y="21" width="2" height="1.4"/><rect x="20" y="21" width="2" height="1.4"/><rect x="9" y="9" width="2" height="1.4"/><rect x="14" y="9" width="2" height="1.4"/></g></svg>
<svg class="abs" style="left:384px;top:690px" width="25" height="20" viewBox="0 0 25 20"><g fill="#fff" stroke="#666" stroke-width="0.9"><path d="M2,12 L3,16 L22,19 L23,15"/><path d="M1,10.5 L1.5,14 L23,16.5"/><rect x="1" y="1" width="23" height="11"/><rect x="3" y="3" width="19" height="7" stroke-width="0.6"/><circle cx="12.5" cy="6.5" r="3"/><circle cx="6" cy="6.5" r="1"/><circle cx="19" cy="6.5" r="1"/></g></svg>
<svg class="abs" style="left:482px;top:689px" width="23" height="23" viewBox="0 0 23 23"><g fill="none" stroke="#777" stroke-width="1"><path d="M11.5,1 A10.5,10.5 0 1 0 21.5,8.5"/><path d="M13,1.2 A10.5,10.5 0 0 1 21.8,10"/><circle cx="11.5" cy="11.5" r="7.5"/><path d="M13.5,8.2 C13,7 10,7 10,8.8 C10,10.5 13.5,10.5 13.5,12.5 C13.5,14.7 10.2,14.6 9.7,13.3 M11.6,5.8 V16.8" stroke-width="0.9"/></g></svg>
<svg class="abs" style="left:553px;top:689px" width="23" height="23" viewBox="0 0 23 23"><g fill="none" stroke="#777" stroke-width="1"><path d="M11.5,1 A10.5,10.5 0 1 0 21.5,8.5"/><path d="M13,1.2 A10.5,10.5 0 0 1 21.8,10"/><circle cx="11.5" cy="11.5" r="7.5"/><path d="M13.5,8.2 C13,7 10,7 10,8.8 C10,10.5 13.5,10.5 13.5,12.5 C13.5,14.7 10.2,14.6 9.7,13.3 M11.6,5.8 V16.8" stroke-width="0.9"/></g></svg>
<svg class="abs" style="left:19px;top:449px" width="8" height="10" viewBox="0 0 8 10"><path d="M6,1.5 L2.2,5 L6,8.5" fill="none" stroke="#fff" stroke-width="2"/></svg><svg class="abs" style="left:19px;top:710px" width="8" height="10" viewBox="0 0 8 10"><path d="M6,1.5 L2.2,5 L6,8.5" fill="none" stroke="#fff" stroke-width="2"/></svg>
<div class="abs" style="left:15px;top:59px;width:36px;height:42px;background:#fff;border-radius:0 4px 4px 0"></div>
<svg class="abs" style="left:25px;top:72px" width="16" height="16" viewBox="0 0 16 16"><circle cx="6.5" cy="6.5" r="4.2" fill="none" stroke="#555" stroke-width="1.3"/><path d="M9.6,9.6 L13.2,13.2" stroke="#555" stroke-width="1.5"/></svg>
<div class="abs" style="left:1781px;top:59px;width:40px;height:81px;background:#fff;box-shadow:0 1px 4px rgba(0,0,0,.2);border-radius:2px"></div>
<div class="abs" style="left:1786px;top:99px;width:30px;height:1px;background:#e6e6e6"></div>
<div class="abs" style="left:1792px;top:77px;width:18px;height:4px;background:#666"></div>
<div class="abs" style="left:1799px;top:70px;width:4px;height:18px;background:#666"></div>
<div class="abs" style="left:1792px;top:118px;width:18px;height:4px;background:#666"></div>
<div class="abs" style="left:875px;top:793px;width:96px;height:24px;background:#fff;border-radius:3px;box-shadow:0 1px 3px rgba(0,0,0,.2)"></div>
<div class="abs" style="left:899px;top:793px;width:1px;height:24px;background:#e8e8e8"></div>
<div class="abs" style="left:923px;top:793px;width:1px;height:24px;background:#e8e8e8"></div>
<div class="abs" style="left:947px;top:793px;width:1px;height:24px;background:#e8e8e8"></div>
<div class="abs" style="left:977px;top:793px;width:20px;height:24px;background:#fff;border-radius:3px;box-shadow:0 1px 3px rgba(0,0,0,.2)"></div>
<svg class="abs" style="left:879px;top:797px" width="16" height="16" viewBox="0 0 16 16"><path d="M4.5,14.5 C3,12.5 1.5,10 1.5,8.5 C1.5,7.5 2.8,7.5 3.5,8.5 L4.5,9.5 V3.5 C4.5,2.5 6,2.5 6,3.5 V7 V2 C6,1 7.5,1 7.5,2 V7 V2.5 C7.5,1.5 9,1.5 9,2.5 V7 V3.5 C9,2.5 10.5,2.5 10.5,3.5 V9.5 C10.5,11.5 10,13 9,14.5" fill="#fff" stroke="#111" stroke-width="1.1" stroke-linejoin="round"/></svg>
<svg class="abs" style="left:903px;top:798px" width="16" height="14" viewBox="0 0 16 14"><path d="M1.5,1.5 L6,12.5 L14.5,10 L13,3.5 L8,7.5 Z" fill="#aaa" stroke="#777" stroke-width="1"/></svg>
<div class="abs" style="left:928px;top:798px;width:14px;height:14px;border-radius:50%;background:#aaa;border:1px solid #888"></div>
<div class="abs" style="left:952px;top:798px;width:14px;height:14px;background:#aaa;border:1px solid #888"></div>
<svg class="abs" style="left:978px;top:797px" width="18" height="16" viewBox="0 0 18 16"><g transform="rotate(-30 9 8)"><rect x="1" y="5" width="16" height="6" fill="#777"/><path d="M4,5 V8 M7,5 V7 M10,5 V8 M13,5 V7" stroke="#ddd" stroke-width="0.9"/></g></svg>
<svg class="abs" style="left:20px;top:794px" width="70" height="28" viewBox="20 794 70 28"><text x="24" y="814.3" font-family="Liberation Sans" font-size="18" stroke="#fff" stroke-width="2.2" paint-order="stroke" stroke-linejoin="round"><tspan fill="#4285f4">G</tspan><tspan fill="#ea4335">o</tspan><tspan fill="#fbbc05">o</tspan><tspan fill="#4285f4">g</tspan><tspan fill="#34a853">l</tspan><tspan fill="#ea4335">e</tspan></text></svg>
<div class="abs attr" style="left:1493px;width:94px">Atalhos do teclado</div>
<div class="abs attr" style="left:1588px;width:243px;text-align:left;padding-left:5px">Dados cartográficos ©2025 Google, INEGI</div>
<svg class="abs" style="left:712px;top:837px" width="46" height="17" viewBox="712 837 46 17"><path d="M713,838 H717.8 L723.5,846.2 L729.2,838 H734 V853 H730 V844.6 L723.5,853 L717,844.6 V853 H713 Z" fill="#222"/><rect x="737" y="838" width="3" height="8.5" rx="0.5" fill="#00cc55"/><rect x="743.5" y="838" width="3" height="8.5" rx="0.5" fill="#3a46ff"/><rect x="753.8" y="838" width="3" height="8.5" rx="0.5" fill="#ff0a85"/></svg>
<div class="abs" style="left:763px;top:837px;font-size:12px;color:#9a9a9a;line-height:14px;letter-spacing:-0.22px">Copyright © 2008-2025. Máxima Sistemas. Todos os direitos reservados.</div>
<div class="abs fab" style="left:1783px;top:584px"></div>
<div class="abs fab" style="left:1783px;top:640px"></div>
<div class="abs fab" style="left:1783px;top:695px"></div>
<div class="abs fab" style="left:1783px;top:751px;background:#65833a"></div>
<div class="abs fab big" style="left:1696px;top:800px"></div>
<div class="abs fab big" style="left:1775px;top:800px"></div>
<div class="abs badge" style="left:1812px;top:573px">10</div>
<div class="abs badge" style="left:1812px;top:684px">0</div>
<svg class="abs" style="left:1793px;top:594px" width="20" height="20" viewBox="0 0 20 20"><path d="M10,18.5 C7,15 4,11.5 4,8 A6,6 0 0 1 16,8 C16,11.5 13,15 10,18.5 Z" fill="none" stroke="#fff" stroke-width="1.7"/><path d="M10,4.8 V9.3" stroke="#fff" stroke-width="1.8"/><circle cx="10" cy="11.6" r="1" fill="#fff"/></svg>
<svg class="abs" style="left:1795px;top:652px" width="16" height="16" viewBox="0 0 16 16"><path d="M1.5,1.5 H14.5 V11.5 H4.5 L1.5,14.5 Z" fill="#fff"/><path d="M4,4.8 H12 M4,7 H12 M4,9.2 H9" stroke="#3552a6" stroke-width="1.1"/></svg>
<svg class="abs" style="left:1794px;top:707px" width="18" height="16" viewBox="0 0 18 16"><g fill="#fff"><circle cx="2.5" cy="3" r="1.3"/><circle cx="2.5" cy="8" r="1.3"/><circle cx="2.5" cy="13" r="1.3"/><rect x="5" y="2.2" width="11" height="1.6"/><rect x="5" y="7.2" width="11" height="1.6"/><rect x="5" y="12.2" width="11" height="1.6"/></g></svg>
<svg class="abs" style="left:1794px;top:763px" width="18" height="16" viewBox="0 0 18 16"><g fill="#fff"><rect x="2" y="3" width="14" height="2"/><rect x="5" y="7" width="8" height="2"/><rect x="7.5" y="11" width="3" height="2"/></g></svg>
<svg class="abs" style="left:1709px;top:815px" width="30" height="26" viewBox="0 0 30 26"><g fill="none" stroke="#fff" stroke-width="2.2" stroke-linejoin="round"><circle cx="9.5" cy="8" r="5"/><path d="M1.5,22 C1.5,16.5 5,14 9.5,14 C14,14 17.5,16.5 17.5,22 Z"/><circle cx="20.5" cy="8" r="5"/><path d="M17.5,14.3 C18.5,14 19.5,14 20.5,14 C25,14 28.5,16.5 28.5,22 H17.5"/></g></svg>
<svg class="abs" style="left:1795px;top:823px" width="16" height="12" viewBox="0 0 16 12"><path d="M2.5,3 L8,8.5 L13.5,3" fill="none" stroke="#fff" stroke-width="2.6"/></svg>
</body></html>
